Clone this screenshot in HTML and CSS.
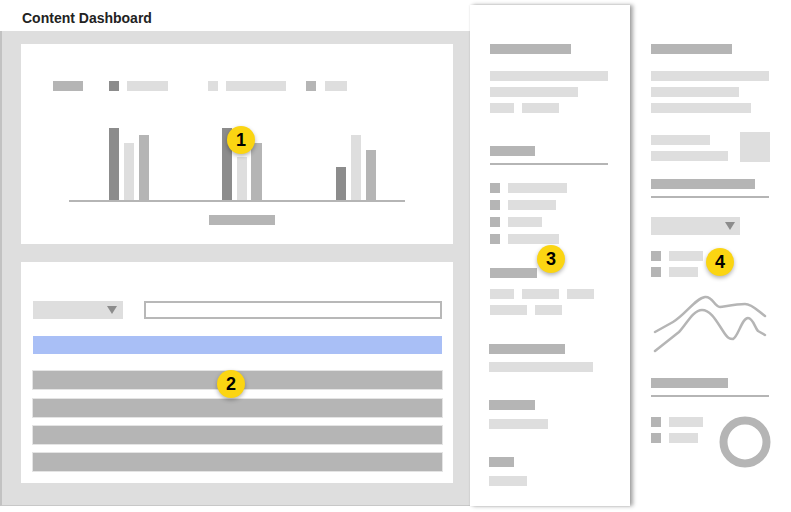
FILE: index.html
```html
<!DOCTYPE html>
<html lang="en">
  <head>
    <meta charset="UTF-8" />
    <title>Content Dashboard</title>
    <link rel="stylesheet" href="styles.css">
  </head>
  <body>
    <!-- Left: title + gray workspace -->
    <section class="main-col">
      <h1 class="page-title">Content Dashboard</h1>
      <div class="workspace">
        <!-- Chart card -->
        <div class="card chart-card">
          <div class="legend">
            <span class="sk dark w30"></span>
            <span class="sq darker ml26"></span><span class="sk light w41 ml8"></span>
            <span class="sq lightsq ml40"></span><span class="sk light w60 ml8"></span>
            <span class="sq dark ml20"></span><span class="sk light w22 ml9"></span>
          </div>
          <svg class="bars" width="432" height="124" viewBox="0 0 432 124">
            <g fill="#8c8c8c">
              <rect x="88" y="37" width="10" height="72" />
              <rect x="201" y="37" width="10" height="72" />
              <rect x="315" y="76" width="10" height="33" />
            </g>
            <g fill="#dedede">
              <rect x="103" y="52" width="10" height="57" />
              <rect x="216" y="66" width="10" height="43" />
              <rect x="330" y="44" width="10" height="65" />
            </g>
            <g fill="#b5b5b5">
              <rect x="118" y="44" width="10" height="65" />
              <rect x="230" y="52" width="11" height="57" />
              <rect x="345" y="59" width="10" height="50" />
              <rect x="48" y="109" width="336" height="2" />
            </g>
          </svg>
          <div class="sk dark w66 axis-label"></div>
          <span class="badge badge-1">1</span>
        </div>

        <!-- Table card -->
        <div class="card table-card">
          <div class="controls">
            <div class="dropdown w90"><span class="caret"></span></div>
            <div class="search"></div>
          </div>
          <div class="row selected"></div>
          <div class="rows">
            <div class="row"></div>
            <div class="row"></div>
            <div class="row"></div>
            <div class="row"></div>
          </div>
          <span class="badge badge-2">2</span>
        </div>
      </div>
    </section>

    <!-- Middle: properties panel -->
    <aside class="side-panel">
      <div class="sk dark w81"></div>
      <div class="sk light w118 mt17"></div>
      <div class="sk light w88 mt6"></div>
      <div class="line mt6">
        <span class="sk light w24"></span><span class="sk light w37"></span>
      </div>

      <div class="sk dark w45 mt33"></div>
      <div class="rule mt7"></div>
      <ul class="check-list mt18">
        <li><span class="sq dark"></span><span class="sk light w59"></span></li>
        <li><span class="sq dark"></span><span class="sk light w48"></span></li>
        <li><span class="sq dark"></span><span class="sk light w34"></span></li>
        <li><span class="sq dark"></span><span class="sk light w51"></span></li>
      </ul>

      <div class="sk dark w47 mt24"></div>
      <div class="line mt11">
        <span class="sk light w24"></span><span class="sk light w37"></span><span class="sk light w27"></span>
      </div>
      <div class="line mt6">
        <span class="sk light w37"></span><span class="sk light w27"></span>
      </div>

      <div class="shift">
        <div class="sk dark w76 mt29"></div>
        <div class="sk light w104 mt8"></div>
        <div class="sk dark w46 mt28"></div>
        <div class="sk light w59 mt9"></div>
        <div class="sk dark w25 mt28"></div>
        <div class="sk light w38 mt9"></div>
      </div>
      <span class="badge badge-3">3</span>
    </aside>

    <!-- Right: widgets column -->
    <aside class="widget-col">
      <div class="sk dark w81"></div>
      <div class="sk light w118 mt17"></div>
      <div class="sk light w88 mt6"></div>
      <div class="sk light w100 mt6"></div>

      <div class="media mt19">
        <div class="media-text">
          <div class="sk light w59"></div>
          <div class="sk light w77 mt6"></div>
        </div>
        <div class="thumb"></div>
      </div>

      <div class="sk dark w104 mt17"></div>
      <div class="rule mt7"></div>
      <div class="dropdown w89 mt19"><span class="caret"></span></div>
      <ul class="check-list legend-list mt16">
        <li><span class="sq dark"></span><span class="sk light w34"></span></li>
        <li><span class="sq dark"></span><span class="sk light w29"></span></li>
      </ul>

      <svg class="lines mt8" width="120" height="75" viewBox="0 0 120 75">
        <g fill="none" stroke="#b5b5b5" stroke-width="2.5" stroke-linecap="round" stroke-linejoin="round">
          <path d="M4,47 L22,37 C34,30 45,13 54,12 C62,11 63,22 69,22 C76,21 86,19 94,19 C101,19 107,26 114,31" />
          <path d="M4,66 L28,47 C35,40 42,25 51,25 C60,25 66,37 72,46 C77,54 79,54 82,54 C87,52 91,33 97,33 C102,33 104,43 107,46 L114,50" />
        </g>
      </svg>

      <div class="sk dark w77 mt18"></div>
      <div class="rule mt7"></div>
      <div class="donut-row mt19">
        <ul class="check-list legend-list">
          <li><span class="sq dark"></span><span class="sk light w34"></span></li>
          <li><span class="sq dark"></span><span class="sk light w29"></span></li>
        </ul>
        <svg class="donut" width="52" height="52" viewBox="0 0 52 52">
          <circle cx="26" cy="26" r="21.5" fill="none" stroke="#b5b5b5" stroke-width="8" />
        </svg>
      </div>
      <span class="badge badge-4">4</span>
    </aside>
  </body>
</html>
```

FILE: styles.css
```css
body {
  font-family: "Liberation Sans", Arial, sans-serif;
  margin: 0;
  padding: 0;
  display: flex;
  align-items: flex-start;
  height: 512px;
  background: #fff;
  overflow: hidden;
}
ul {
  list-style: none;
  margin: 0;
  padding: 0;
}

/* skeleton pieces */
.sk {
  display: block;
  height: 10px;
}
.sq {
  display: block;
  width: 10px;
  height: 10px;
  flex: none;
}
.dark { background: #b5b5b5; }
.darker { background: #8c8c8c; }
.light { background: #dedede; }
.lightsq { background: #dedede; }
.rule {
  width: 118px;
  height: 2px;
  background: #b5b5b5;
}

.w22 { width: 22px; }
.w24 { width: 24px; }
.w25 { width: 25px; }
.w27 { width: 27px; }
.w29 { width: 29px; }
.w30 { width: 30px; }
.w34 { width: 34px; }
.w37 { width: 37px; }
.w38 { width: 38px; }
.w41 { width: 41px; }
.w45 { width: 45px; }
.w46 { width: 46px; }
.w47 { width: 47px; }
.w48 { width: 48px; }
.w51 { width: 51px; }
.w59 { width: 59px; }
.w60 { width: 60px; }
.w66 { width: 66px; }
.w76 { width: 76px; }
.w77 { width: 77px; }
.w81 { width: 81px; }
.w88 { width: 88px; }
.w89 { width: 89px; }
.w90 { width: 90px; }
.w100 { width: 100px; }
.w104 { width: 104px; }
.w118 { width: 118px; }

.ml8 { margin-left: 8px; }
.ml9 { margin-left: 9px; }
.ml20 { margin-left: 20px; }
.ml26 { margin-left: 26px; }
.ml40 { margin-left: 40px; }
.mt6 { margin-top: 6px; }
.mt7 { margin-top: 7px; }
.mt8 { margin-top: 8px; }
.mt9 { margin-top: 9px; }
.mt11 { margin-top: 11px; }
.mt16 { margin-top: 16px; }
.mt17 { margin-top: 17px; }
.mt18 { margin-top: 18px; }
.mt19 { margin-top: 19px; }
.mt24 { margin-top: 24px; }
.mt28 { margin-top: 28px; }
.mt29 { margin-top: 29px; }
.mt33 { margin-top: 33px; }

/* numbered callouts */
.badge {
  position: absolute;
  width: 28px;
  height: 28px;
  border-radius: 50%;
  background: #fbd512;
  color: #000;
  font-weight: bold;
  font-size: 18px;
  line-height: 28px;
  text-align: center;
  box-shadow: 0 2px 4px rgba(0, 0, 0, 0.3);
  z-index: 2;
}
.badge-1 { left: 206px; top: 82px; }
.badge-2 { left: 196px; top: 108px; }
.badge-3 { left: 67px; top: 240px; }
.badge-4 { left: 76px; top: 248px; }

/* left column */
.main-col {
  width: 470px;
  flex: none;
}
.page-title {
  margin: 0;
  height: 31px;
  box-sizing: border-box;
  padding: 10px 0 0 22px;
  font-size: 14px;
  line-height: 16px;
  font-weight: bold;
  color: #222;
}
.workspace {
  height: 475px;
  box-sizing: border-box;
  background: #dedede;
  border-left: 2px solid #c2c2c2;
  border-bottom: 1px solid #c8c8c8;
  padding: 13px 0 0 19px;
  display: flex;
  flex-direction: column;
  gap: 18px;
}
.card {
  position: relative;
  width: 432px;
  background: #fff;
  box-sizing: border-box;
}
.chart-card {
  height: 200px;
  padding-top: 37px;
}
.legend {
  display: flex;
  align-items: center;
  margin-left: 32px;
}
.bars {
  display: block;
}
.axis-label {
  margin-left: 188px;
}

.table-card {
  height: 221px;
  padding: 39px 11px 0 12px;
}
.controls {
  display: flex;
  gap: 21px;
}
.dropdown {
  height: 18px;
  background: #dedede;
  display: flex;
  align-items: center;
  justify-content: flex-end;
  padding-right: 6px;
  box-sizing: border-box;
}
.caret {
  width: 0;
  height: 0;
  border-left: 5px solid transparent;
  border-right: 5px solid transparent;
  border-top: 8px solid #8c8c8c;
}
.search {
  flex: 1;
  height: 18px;
  box-sizing: border-box;
  border: 2px solid #b8b8b8;
}
.row {
  height: 18px;
  background: #b5b5b5;
  box-shadow: 0 0 0 1px #e4e4e4;
}
.row.selected {
  margin-top: 17px;
  background: #a9bff6;
  box-shadow: none;
}
.rows {
  margin-top: 17px;
  display: flex;
  flex-direction: column;
  gap: 9px;
}
.rows .row:nth-child(2) {
  margin-top: 1px;
}

/* middle panel */
.side-panel {
  position: relative;
  z-index: 1;
  flex: none;
  width: 160px;
  height: 501px;
  margin-top: 5px;
  box-sizing: border-box;
  padding: 39px 0 0 20px;
  background: #fff;
  box-shadow: 3px 0 4px rgba(0, 0, 0, 0.35), 0 0 2px rgba(0, 0, 0, 0.1);
}
.line {
  display: flex;
  gap: 8px;
}
.check-list {
  display: flex;
  flex-direction: column;
  gap: 7px;
}
.check-list li {
  display: flex;
  gap: 8px;
}
.shift {
  margin-left: -1px;
}

/* right column */
.widget-col {
  position: relative;
  flex: none;
  width: 161px;
  box-sizing: border-box;
  padding: 44px 0 0 21px;
}
.media {
  width: 119px;
  display: flex;
  justify-content: space-between;
}
.media-text {
  padding-top: 3px;
}
.thumb {
  width: 30px;
  height: 30px;
  background: #dedede;
}
.widget-col .dropdown {
  padding-right: 5px;
}
.legend-list {
  gap: 6px;
}
.lines {
  display: block;
}
.donut-row {
  display: flex;
  gap: 16px;
}
.donut-row .legend-list {
  padding-top: 1px;
}
.donut {
  display: block;
}
```
